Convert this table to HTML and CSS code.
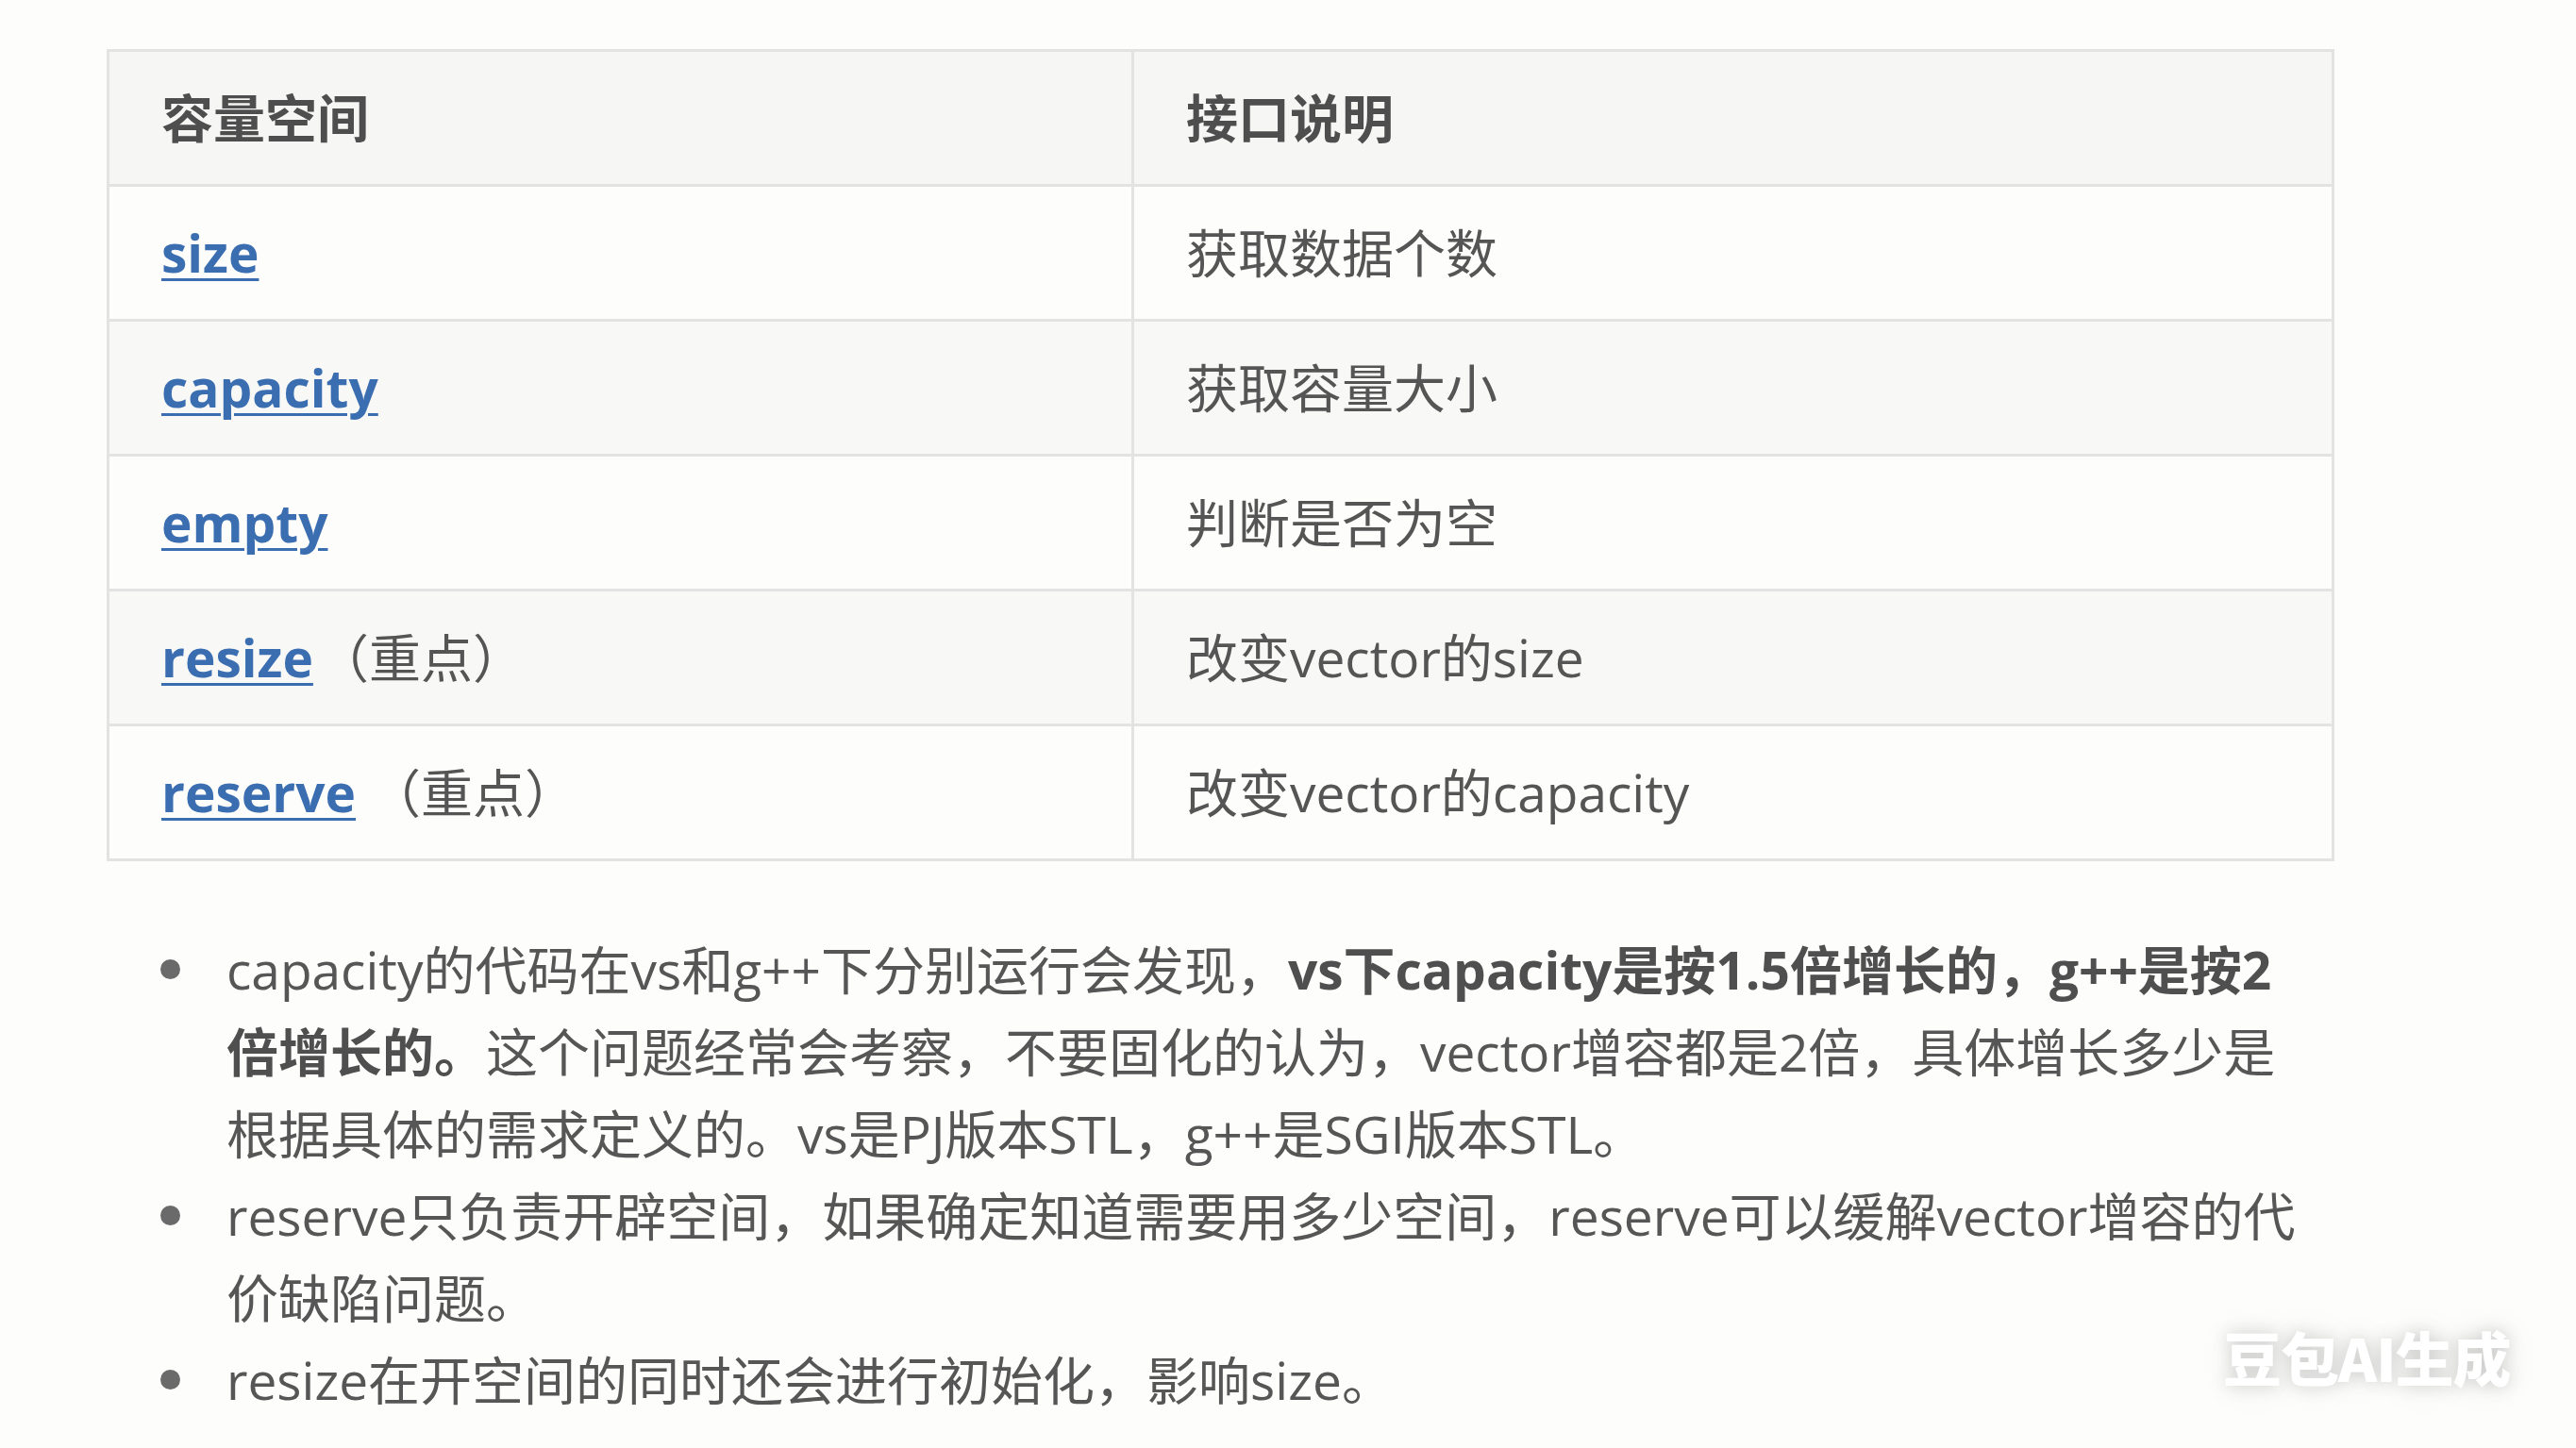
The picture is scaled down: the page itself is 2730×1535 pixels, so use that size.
FILE: index.html
```html
<!DOCTYPE html>
<html lang="zh-CN">
<head>
<meta charset="utf-8">
<title>vector 容量空间</title>
<link rel="stylesheet" href="styles.css">
</head>
<body>
<main class="page">
  <table class="api-table">
    <thead>
      <tr><th class="col-name">容量空间</th><th>接口说明</th></tr>
    </thead>
    <tbody>
      <tr><td><a class="api-link" href="#">size</a></td><td>获取数据个数</td></tr>
      <tr class="stripe"><td><a class="api-link" href="#">capacity</a></td><td>获取容量大小</td></tr>
      <tr><td><a class="api-link" href="#">empty</a></td><td>判断是否为空</td></tr>
      <tr class="stripe"><td><a class="api-link" href="#">resize</a><span class="mark">（重点）</span></td><td>改变vector的size</td></tr>
      <tr><td><a class="api-link" href="#">reserve</a><span class="mark gap">（重点）</span></td><td>改变vector的capacity</td></tr>
    </tbody>
  </table>

  <ul class="notes">
    <li>capacity的代码在vs和g++下分别运行会发现，<strong>vs下capacity是按1.5倍增长的，g++是按2</strong><strong>倍增长的。</strong>这个问题经常会考察，不要固化的认为，vector增容都是2倍，具体增长多少是根据具体的需求定义的。vs是PJ版本STL，g++是SGI版本STL。</li>
    <li>reserve只负责开辟空间，如果确定知道需要用多少空间，reserve可以缓解vector增容的代价缺陷问题。</li>
    <li>resize在开空间的同时还会进行初始化，影响size。</li>
  </ul>

  <div class="watermark">豆包AI生成</div>
</main>
</body>
</html>
```

FILE: styles.css
```css
html, body {
  margin: 0;
  padding: 0;
  background: #fdfdfc;
}

body {
  font-family: "Open Sans", "Noto Sans CJK SC", sans-serif;
  color: #555555;
  font-size: 55px;
}

.page {
  position: relative;
  width: 2730px;
  height: 1535px;
  padding: 52px 0 0 113px;
  box-sizing: border-box;
  overflow: hidden;
}

.api-table {
  width: 2361px;
  border-collapse: collapse;
  table-layout: fixed;
  border: 3px solid #e3e3e3;
}

.api-table th,
.api-table td {
  height: 140px;
  padding: 0 0 0 55px;
  border: 3px solid #e3e3e3;
  text-align: left;
  vertical-align: middle;
  line-height: 1.2;
  white-space: nowrap;
}

.api-table .col-name {
  width: 1028px;
}

.api-table th {
  background: #f6f6f5;
  font-weight: 700;
  color: #4e4e4e;
}

.api-table td {
  font-weight: 400;
  color: #555555;
}

.api-table tr.stripe td {
  background: #f8f8f7;
}

.api-link {
  color: #3b6eb0;
  font-weight: 700;
  text-decoration: underline;
  text-decoration-thickness: 3px;
  text-underline-offset: 6px;
}

.mark {
  color: #555555;
  margin-left: 4px;
}

.mark.gap {
  margin-left: 14px;
}

.notes {
  list-style: none;
  margin: 71px 0 0 0;
  padding: 0 0 0 127px;
  width: 2222px;
  line-height: 87px;
  color: #565656;
}

.notes li {
  position: relative;
}

.notes li::before {
  content: "";
  position: absolute;
  left: -70px;
  top: 33px;
  width: 21px;
  height: 21px;
  border-radius: 50%;
  background: #6a6a6a;
}

.notes strong {
  font-weight: 700;
  color: #4f4f4f;
}

.watermark {
  position: absolute;
  left: 2356px;
  top: 1396px;
  font-family: "Noto Sans CJK SC", sans-serif;
  font-weight: 900;
  font-size: 62px;
  line-height: 84px;
  color: #ffffff;
  letter-spacing: -1px;
  text-shadow: 0 0 18px rgba(0, 0, 0, 0.18), 0 0 40px rgba(0, 0, 0, 0.08);
}
```
